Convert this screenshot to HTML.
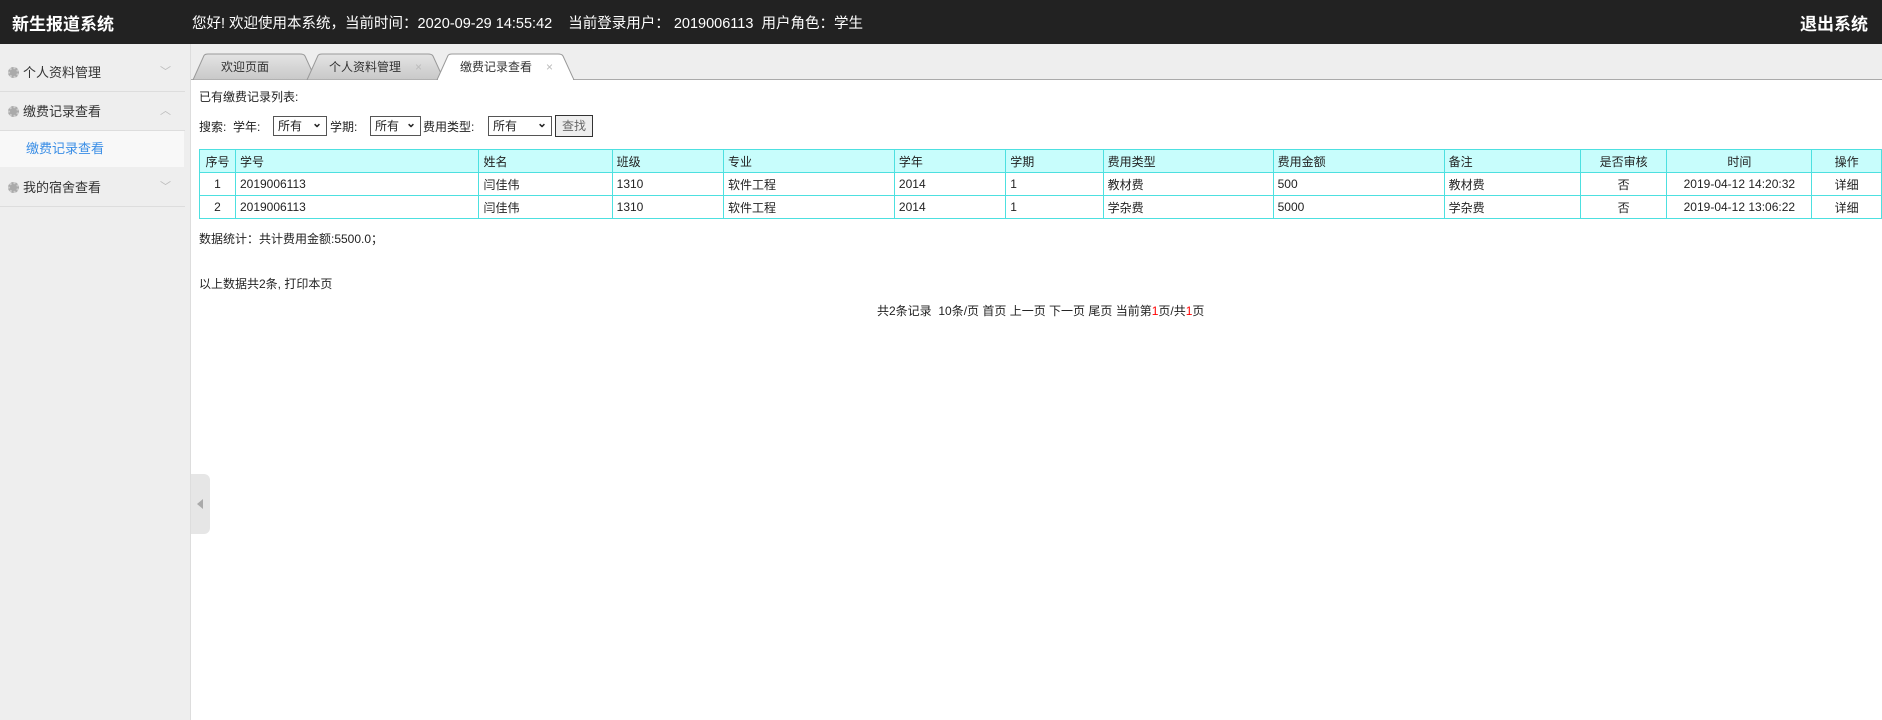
<!DOCTYPE html>
<html><head><meta charset="utf-8"><style>
*{margin:0;padding:0;box-sizing:border-box}
body{width:1882px;height:720px;overflow:hidden;background:#fff;font-family:"Liberation Sans","Noto Sans CJK SC",sans-serif;font-size:12px;color:#222;position:relative}
#hd{position:absolute;left:0;top:0;width:1882px;height:44px;background:#222;color:#fff}
#hd .t{position:absolute;left:12px;top:10px;font-size:17px;font-weight:bold}
#hd .m{position:absolute;left:192px;top:12px;font-size:14.5px}
#hd .o{position:absolute;right:14px;top:10px;font-size:17px;font-weight:bold}
#sb{position:absolute;left:0;top:44px;width:191px;height:676px;background:#eee;border-right:1px solid #ddd}
.it{position:absolute;left:0;width:185px;height:39px;border-bottom:1px solid #ddd;font-size:13px;color:#333;line-height:39px;padding-left:8px}
.it i{display:inline-block;width:11px;height:11px;border-radius:50%;background:#aaa;vertical-align:-1px;margin-right:4px;border:2px dotted #ccc}
.it b{position:absolute;right:14px;top:0;color:#bbb;font-weight:normal;font-size:11px}
.sub{position:absolute;left:0;top:87px;width:184px;height:36px;background:#f8f8f8;color:#3a8ee6;font-size:13px;line-height:36px;padding-left:26px}
#strip{position:absolute;left:191px;top:44px}
table{border-collapse:collapse;position:absolute;left:199px;top:149px;table-layout:fixed}
td{border:1px solid #4de0e0;height:23px;padding:0 4px;font-size:12px;white-space:nowrap}
tr.h td{background:#c8fdfc}
.c{text-align:center}
.coll{position:absolute;left:191px;top:474px;width:19px;height:60px;background:#e6e6e6;border-radius:0 6px 6px 0}
.coll:after{content:"";position:absolute;left:6px;top:25px;border:5px solid transparent;border-right:6px solid #aaa;border-left:none}
.a{position:absolute;white-space:nowrap}
.sel{position:absolute;top:116px;height:20px;border:1px solid #555;line-height:18px;padding-left:4px}
.sel:after{content:"⌄";position:absolute;right:4px;top:-3px;font-weight:bold}
</style></head><body>
<div id="hd"><div class="t">新生报道系统</div><div class="m">您好! 欢迎使用本系统，当前时间：2020-09-29 14:55:42 &nbsp;&nbsp;&nbsp;当前登录用户： 2019006113 &nbsp;用户角色：学生</div><div class="o">退出系统</div></div>
<div id="sb">
<div class="it" style="top:9px"><i></i>个人资料管理<b>﹀</b></div>
<div class="it" style="top:48px"><i></i>缴费记录查看<b>︿</b></div>
<div class="sub">缴费记录查看</div>
<div class="it" style="top:124px"><i></i>我的宿舍查看<b>﹀</b></div>
</div>
<svg id="strip" width="1691" height="36" viewBox="191 44 1691 36">
<rect x="191" y="44" width="1691" height="36" fill="#eee"/>
<line x1="191" y1="79.5" x2="1882" y2="79.5" stroke="#aaa"/>
<defs><linearGradient id="g" x1="0" y1="0" x2="0" y2="1"><stop offset="0" stop-color="#e4e4e4"/><stop offset="1" stop-color="#c8c8c8"/></linearGradient></defs>
<path d="M193 80 L204 55.5 Q205 54 208 54 L300 54 Q304 54 305 56 L316 80Z" fill="url(#g)" stroke="#999"/>
<path d="M307 80 L318 55.5 Q319 54 322 54 L428 54 Q432 54 433 56 L444 80Z" fill="url(#g)" stroke="#999"/>
<path d="M437 80 L448 55.5 Q449 54 452 54 L558 54 Q562 54 563 56 L574 80Z" fill="#fff" stroke="#999"/>
<line x1="438" y1="79.5" x2="573" y2="79.5" stroke="#fff" stroke-width="2"/>
<g font-family="Liberation Sans,Noto Sans CJK SC,sans-serif" font-size="12" fill="#333">
<text x="221" y="71">欢迎页面</text><text x="329" y="71">个人资料管理</text><text x="415" y="71" fill="#bbb">×</text>
<text x="460" y="71">缴费记录查看</text><text x="546" y="71" fill="#bbb">×</text></g>
</svg>
<div class="a" style="left:199px;top:88px">已有缴费记录列表:</div>
<div class="a" style="left:199px;top:118px">搜索: &nbsp;学年: </div>
<div class="sel" style="left:273px;width:54px">所有</div>
<div class="a" style="left:330px;top:118px">学期: </div>
<div class="sel" style="left:370px;width:51px">所有</div>
<div class="a" style="left:423px;top:118px">费用类型: </div>
<div class="sel" style="left:488px;width:64px">所有</div>
<div class="a" style="left:555px;top:115px;width:38px;height:22px;border:1px solid #333;background:#eee;line-height:20px;text-align:center;color:#666">查找</div>
<table>
<colgroup><col style="width:36px"><col style="width:245px"><col style="width:134px"><col style="width:112px"><col style="width:172px"><col style="width:112px"><col style="width:98px"><col style="width:171px"><col style="width:172px"><col style="width:137px"><col style="width:87px"><col style="width:145px"><col style="width:70px"></colgroup>
<tr class="h"><td class="c">序号</td><td>学号</td><td>姓名</td><td>班级</td><td>专业</td><td>学年</td><td>学期</td><td>费用类型</td><td>费用金额</td><td>备注</td><td class="c">是否审核</td><td class="c">时间</td><td class="c">操作</td></tr>
<tr><td class="c">1</td><td>2019006113</td><td>闫佳伟</td><td>1310</td><td>软件工程</td><td>2014</td><td>1</td><td>教材费</td><td>500</td><td>教材费</td><td class="c">否</td><td class="c">2019-04-12 14:20:32</td><td class="c">详细</td></tr>
<tr><td class="c">2</td><td>2019006113</td><td>闫佳伟</td><td>1310</td><td>软件工程</td><td>2014</td><td>1</td><td>学杂费</td><td>5000</td><td>学杂费</td><td class="c">否</td><td class="c">2019-04-12 13:06:22</td><td class="c">详细</td></tr>
</table>
<div class="a" style="left:199px;top:230px">数据统计：共计费用金额:5500.0；</div>
<div class="a" style="left:199px;top:275px">以上数据共2条, 打印本页</div>
<div class="a" style="left:877px;top:302px">共2条记录 &nbsp;10条/页 首页 上一页 下一页 尾页 当前第<span style="color:red">1</span>页/共<span style="color:red">1</span>页</div>
<div class="coll"></div>
</body></html>
